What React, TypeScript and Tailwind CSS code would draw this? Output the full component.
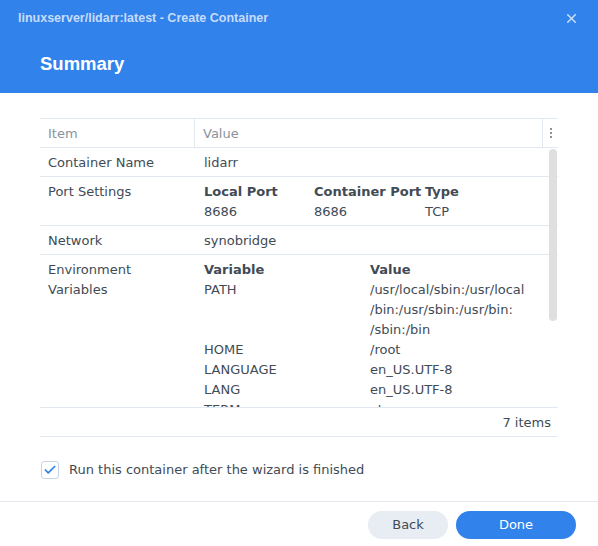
import { Check, X } from "lucide-react";

const body = { fontFamily: '"DejaVu Sans", Verdana, sans-serif' };
const title = { fontFamily: '"Liberation Sans", Arial, sans-serif' };

const envRows = [
  { name: "PATH", value: ["/usr/local/sbin:/usr/local", "/bin:/usr/sbin:/usr/bin:", "/sbin:/bin"] },
  { name: "HOME", value: ["/root"] },
  { name: "LANGUAGE", value: ["en_US.UTF-8"] },
  { name: "LANG", value: ["en_US.UTF-8"] },
  { name: "TERM", value: ["xterm"] },
];

export default function App() {
  return (
    <div className="w-[598px] h-[546px] bg-white flex flex-col overflow-hidden text-[13px] text-[#414b55]" style={body}>
      {/* header */}
      <div className="h-[93px] shrink-0 bg-[#3282eb] flex flex-col">
        <div className="h-[37px] flex items-center justify-between pl-[18px] pr-[19px]">
          <span className="font-bold text-[12.5px] text-[#c6dcfa]" style={title}>
            linuxserver/lidarr:latest - Create Container
          </span>
          <X size={15} strokeWidth={2.6} className="text-[#c6dcfa]" />
        </div>
        <div className="pl-[40px] pt-[13px] text-white font-bold text-[18.5px]" style={title}>
          Summary
        </div>
      </div>

      {/* table */}
      <div className="px-[40px] pt-[25px]">
        <div className="border-t border-b border-[#e2e8ef]">
          <div className="h-[29px] flex items-stretch border-b border-[#e2e8ef] text-[#8a939c]">
            <div className="w-[155px] pl-[8px] pt-[1px] flex items-center border-r border-[#e2e8ef]">Item</div>
            <div className="flex-1 pl-[8px] pt-[1px] flex items-center border-r border-[#e2e8ef]">Value</div>
            <div className="w-[15px] flex flex-col items-center justify-center gap-[2px]">
              <span className="w-[2px] h-[2px] bg-[#8a939c]" />
              <span className="w-[2px] h-[2px] bg-[#8a939c]" />
              <span className="w-[2px] h-[2px] bg-[#8a939c]" />
            </div>
          </div>

          <div className="relative h-[259px] overflow-hidden">
            <div className="absolute right-[1px] top-[1px] w-[8px] h-[172px] rounded-[4px] bg-[#dfdfdf]" />
            <div className="flex border-b border-[#e2e8ef] leading-[20px] pt-[5px] pb-[3px]">
              <div className="w-[156px] pl-[8px]">Container Name</div>
              <div className="flex-1 pl-[8px]">lidarr</div>
            </div>
            <div className="flex border-b border-[#e2e8ef] leading-[20px] pt-[5px] pb-[3px]">
              <div className="w-[156px] pl-[8px]">Port Settings</div>
              <div className="flex-1 pl-[8px] flex">
                <div className="w-[110px]">
                  <div className="font-bold">Local Port</div>
                  <div>8686</div>
                </div>
                <div className="w-[111px]">
                  <div className="font-bold">Container Port</div>
                  <div>8686</div>
                </div>
                <div>
                  <div className="font-bold">Type</div>
                  <div>TCP</div>
                </div>
              </div>
            </div>
            <div className="flex border-b border-[#e2e8ef] leading-[20px] pt-[5px] pb-[3px]">
              <div className="w-[156px] pl-[8px]">Network</div>
              <div className="flex-1 pl-[8px]">synobridge</div>
            </div>
            <div className="flex leading-[20px] pt-[5px] pb-[3px]">
              <div className="w-[156px] pl-[8px]">
                Environment
                <br />
                Variables
              </div>
              <div className="flex-1 pl-[8px]">
                <div className="flex font-bold">
                  <div className="w-[166px]">Variable</div>
                  <div>Value</div>
                </div>
                {envRows.map((r) => (
                  <div key={r.name} className="flex">
                    <div className="w-[166px]">{r.name}</div>
                    <div>
                      {r.value.map((v) => (
                        <div key={v}>{v}</div>
                      ))}
                    </div>
                  </div>
                ))}
              </div>
            </div>
          </div>

          <div className="h-[29px] border-t border-[#e2e8ef] flex items-center justify-end pr-[7px] pt-[1px]">7 items</div>
        </div>
      </div>

      {/* checkbox */}
      <div className="px-[41px] pt-[23px] flex items-center gap-[10px]">
        <div className="w-[18px] h-[18px] rounded-[3px] border border-[#c9d6e6] flex items-center justify-center">
          <Check size={14} strokeWidth={3} className="text-[#3282eb]" />
        </div>
        <span>Run this container after the wizard is finished</span>
      </div>

      <div className="mt-[21px] border-t border-[#e4e7ee]" />

      <div className="flex justify-end gap-[8px] pr-[22px] pt-[9px]">
        <button className="w-[80px] h-[28px] rounded-full bg-[#e8edf3] text-[#414b55]" style={body}>
          Back
        </button>
        <button className="w-[120px] h-[28px] rounded-full bg-[#3282eb] text-white" style={body}>
          Done
        </button>
      </div>
    </div>
  );
}
